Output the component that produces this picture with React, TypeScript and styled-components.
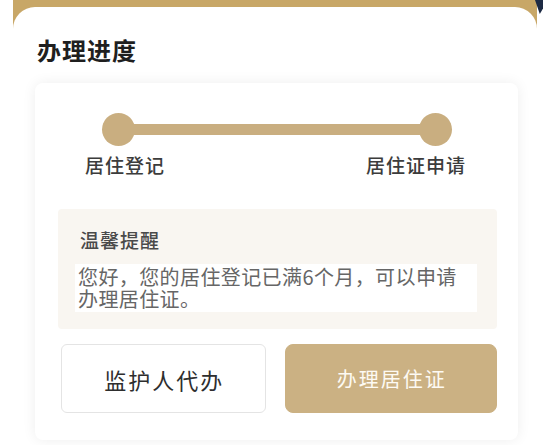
import React from "react";
import styled, { createGlobalStyle } from "styled-components";

const Global = createGlobalStyle`
  html, body { margin: 0; padding: 0; background: #ffffff; }
  body { font-family: "Noto Sans CJK SC", "Noto Sans", sans-serif; }
  #root { width: 550px; height: 445px; overflow: hidden; }
`;

const Page = styled.div`
  width: 550px;
  height: 445px;
  background: #ffffff;
  position: relative;
  overflow: hidden;
`;

const Shell = styled.div`
  margin: 0 13px;
  background: linear-gradient(#c8a767 0, #c8a767 34px, #ffffff 34px);
  padding-top: 7px;
  position: relative;
  &::after {
    content: "";
    position: absolute;
    top: 0;
    right: -6px;
    width: 8px;
    height: 14px;
    background: #1d2a44;
    clip-path: polygon(0 0, 100% 0, 100% 60%, 60% 100%);
  }
`;

const Panel = styled.div`
  background: #ffffff;
  border-radius: 22px 22px 0 0;
  padding: 27px 19px 0 22px;
  height: 438px;
  box-sizing: border-box;
`;

const Title = styled.h2`
  margin: 0 0 0 2px;
  font-size: 24px;
  line-height: 32px;
  font-weight: 700;
  letter-spacing: 1px;
  color: #1f1f1f;
`;

const Card = styled.div`
  margin-top: 17px;
  background: #ffffff;
  border-radius: 8px;
  box-shadow: 0 0 14px rgba(0, 0, 0, 0.07);
  padding: 30px 21px 27px 23px;
`;

const Track = styled.div`
  display: flex;
  align-items: center;
  margin: 0 45px 0 44px;
  height: 33px;
`;

const Dot = styled.div`
  width: 33px;
  height: 33px;
  border-radius: 50%;
  background: #c9ae80;
  flex: none;
`;

const Bar = styled.div`
  flex: 1;
  height: 11px;
  background: #c9ae80;
  margin: 0 -2px;
`;

const Labels = styled.div`
  display: flex;
  justify-content: space-between;
  margin: 7px 31px 0 27px;
`;

const StepLabel = styled.span`
  font-size: 19px;
  line-height: 24px;
  font-weight: 500;
  letter-spacing: 1px;
  color: #3c3c3c;
`;

const Tip = styled.div`
  margin-top: 32px;
  background: #f9f6f1;
  border-radius: 4px;
  padding: 19px 20px 17px 17px;
`;

const TipTitle = styled.div`
  font-size: 19px;
  line-height: 24px;
  font-weight: 500;
  letter-spacing: 1px;
  color: #4a4a4a;
  padding-left: 5px;
`;

const TipBody = styled.p`
  margin: 12px 0 0;
  background: #ffffff;
  padding: 2px 9px 2px 3px;
  font-size: 20px;
  line-height: 22px;
  color: #666666;
  letter-spacing: 0.4px;
`;

const Actions = styled.div`
  display: grid;
  grid-template-columns: 205fr 213fr;
  gap: 19px;
  margin: 15px 0 0 3px;
`;

const Button = styled.button<{ $primary?: boolean }>`
  height: 69px;
  border-radius: ${(p) => (p.$primary ? "8px" : "6px")};
  border: 1px solid ${(p) => (p.$primary ? "#cbb183" : "#e4e4e4")};
  background: ${(p) => (p.$primary ? "#cbb183" : "#ffffff")};
  color: ${(p) => (p.$primary ? "#fdfaf3" : "#2e2e2e")};
  font-family: "Noto Sans CJK SC", "Noto Sans", sans-serif;
  font-size: ${(p) => (p.$primary ? "20px" : "22px")};
  letter-spacing: 2px;
  padding: 0 0 0 2px;
  cursor: pointer;
`;

export default function App() {
  return (
    <Page>
      <Global />
      <Shell>
        <Panel>
          <Title>办理进度</Title>
          <Card>
            <Track>
              <Dot />
              <Bar />
              <Dot />
            </Track>
            <Labels>
              <StepLabel>居住登记</StepLabel>
              <StepLabel>居住证申请</StepLabel>
            </Labels>
            <Tip>
              <TipTitle>温馨提醒</TipTitle>
              <TipBody>您好，您的居住登记已满6个月，可以申请办理居住证。</TipBody>
            </Tip>
            <Actions>
              <Button>监护人代办</Button>
              <Button $primary>办理居住证</Button>
            </Actions>
          </Card>
        </Panel>
      </Shell>
    </Page>
  );
}
